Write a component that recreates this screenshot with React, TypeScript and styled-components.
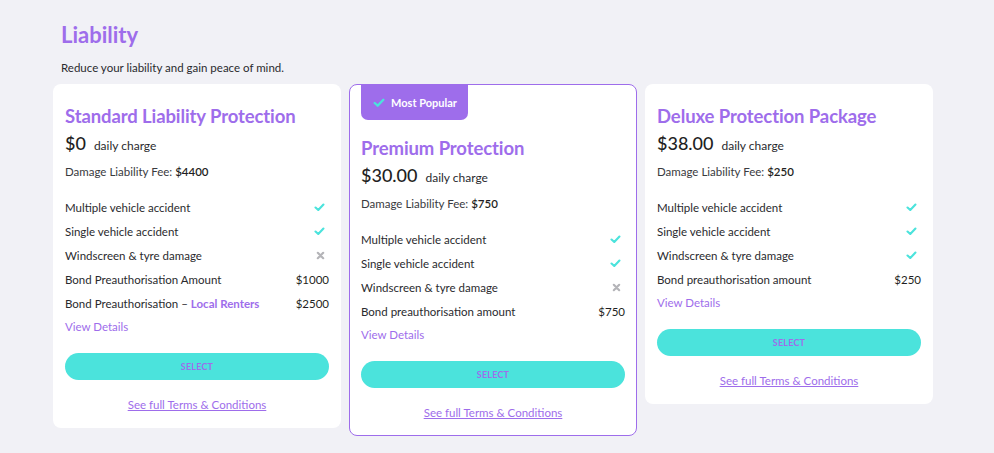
import styled, { createGlobalStyle } from "styled-components";

const GlobalStyle = createGlobalStyle`
  html, body {
    margin: 0;
    padding: 0;
    background: #f1f1f6;
    font-family: "Lato", "Open Sans", sans-serif;
    color: #2a2a2e;
  }
`;

const PURPLE = "#9e6deb";
const TEAL = "#4be3dc";

const Page = styled.div`
  padding: 20px 0 0 53px;
  width: 994px;
  height: 453px;
  box-sizing: border-box;
`;

const Heading = styled.h1`
  margin: 0 0 0 8px;
  font-size: 22px;
  line-height: 30px;
  font-weight: 700;
  color: ${PURPLE};
`;

const Subtitle = styled.p`
  margin: 11px 0 0 8px;
  font-size: 11.5px;
  line-height: 14px;
  color: #2a2a2e;
`;

const Cards = styled.div`
  display: flex;
  align-items: flex-start;
  gap: 8px;
  margin-top: 9px;
`;

const Card = styled.div<{ $featured?: boolean }>`
  width: 288px;
  box-sizing: border-box;
  background: #fff;
  border-radius: 8px;
  border: 1px solid ${(p) => (p.$featured ? PURPLE : "transparent")};
  padding: 0 11px 14px;
  display: flex;
  flex-direction: column;
`;

const Badge = styled.div`
  align-self: flex-start;
  display: flex;
  align-items: center;
  gap: 6px;
  height: 35px;
  padding: 0 11px 0 12px;
  background: ${PURPLE};
  color: #fff;
  font-size: 11px;
  font-weight: 700;
  border-radius: 0 0 7px 7px;
  margin-bottom: 17px;
`;

const Title = styled.h2<{ $first?: boolean }>`
  margin: ${(p) => (p.$first ? "20px" : "0")} 0 0;
  font-size: 18.5px;
  line-height: 22px;
  font-weight: 700;
  color: ${PURPLE};
  letter-spacing: -0.1px;
`;

const PriceRow = styled.div`
  display: flex;
  align-items: baseline;
  gap: 8px;
  margin-top: 4px;
  line-height: 24px;
`;

const Price = styled.span`
  font-size: 18px;
  font-weight: 500;
  color: #1f1f23;
`;

const PriceNote = styled.span`
  font-size: 12px;
  color: #2a2a2e;
`;

const Fee = styled.div`
  margin-top: 6px;
  font-size: 11.5px;
  line-height: 16px;
  color: #3a3a3e;

  b {
    font-weight: 600;
    color: #1f1f23;
  }
`;

const Features = styled.ul`
  list-style: none;
  margin: 15px 0 0;
  padding: 0;
`;

const Feature = styled.li`
  display: flex;
  justify-content: space-between;
  align-items: center;
  height: 24px;
  font-size: 11.5px;
  color: #2a2a2e;
`;

const Value = styled.span`
  font-size: 11.5px;
  color: #1f1f23;
`;

const Highlight = styled.span`
  color: ${PURPLE};
  font-weight: 700;
`;

const IconSlot = styled.span`
  display: flex;
  margin-right: 4px;
`;

const Link = styled.a`
  display: block;
  line-height: 24px;
  font-size: 11.5px;
  color: ${PURPLE};
  text-decoration: none;
  cursor: pointer;
`;

const SelectButton = styled.button`
  margin-top: 14px;
  height: 27px;
  width: 100%;
  border: none;
  border-radius: 14px;
  background: ${TEAL};
  color: ${PURPLE};
  font-family: inherit;
  font-size: 9px;
  font-weight: 700;
  letter-spacing: 0.2px;
  cursor: pointer;
`;

const Terms = styled.a`
  margin-top: 17px;
  align-self: center;
  line-height: 16px;
  font-size: 11.5px;
  color: ${PURPLE};
  text-decoration: underline;
  cursor: pointer;
`;

const Check = ({ size = 11 }: { size?: number }) => (
  <svg width={size} height={size * 0.8} viewBox="0 0 12 10">
    <path
      d="M1.5 5.2 L4.6 8 L10.5 1.8"
      fill="none"
      stroke={TEAL}
      strokeWidth={2.4}
      strokeLinecap="round"
      strokeLinejoin="round"
    />
  </svg>
);

const Cross = () => (
  <svg width={9} height={9} viewBox="0 0 10 10">
    <path
      d="M2 2 L8 8 M8 2 L2 8"
      stroke="#b4b4b8"
      strokeWidth={2.4}
      strokeLinecap="round"
    />
  </svg>
);

type Row = { label: React.ReactNode; value?: string; ok?: boolean };

type Plan = {
  name: string;
  price: string;
  fee: string;
  featured?: boolean;
  rows: Row[];
};

const plans: Plan[] = [
  {
    name: "Standard Liability Protection",
    price: "$0",
    fee: "$4400",
    rows: [
      { label: "Multiple vehicle accident", ok: true },
      { label: "Single vehicle accident", ok: true },
      { label: "Windscreen & tyre damage", ok: false },
      { label: "Bond Preauthorisation Amount", value: "$1000" },
      {
        label: (
          <>
            Bond Preauthorisation – <Highlight>Local Renters</Highlight>
          </>
        ),
        value: "$2500",
      },
    ],
  },
  {
    name: "Premium Protection",
    price: "$30.00",
    fee: "$750",
    featured: true,
    rows: [
      { label: "Multiple vehicle accident", ok: true },
      { label: "Single vehicle accident", ok: true },
      { label: "Windscreen & tyre damage", ok: false },
      { label: "Bond preauthorisation amount", value: "$750" },
    ],
  },
  {
    name: "Deluxe Protection Package",
    price: "$38.00",
    fee: "$250",
    rows: [
      { label: "Multiple vehicle accident", ok: true },
      { label: "Single vehicle accident", ok: true },
      { label: "Windscreen & tyre damage", ok: true },
      { label: "Bond preauthorisation amount", value: "$250" },
    ],
  },
];

const PlanCard = ({ plan }: { plan: Plan }) => (
  <Card $featured={plan.featured}>
    {plan.featured && (
      <Badge>
        <Check size={12} />
        Most Popular
      </Badge>
    )}
    <Title $first={!plan.featured}>{plan.name}</Title>
    <PriceRow>
      <Price>{plan.price}</Price>
      <PriceNote>daily charge</PriceNote>
    </PriceRow>
    <Fee>
      Damage Liability Fee: <b>{plan.fee}</b>
    </Fee>
    <Features>
      {plan.rows.map((row, i) => (
        <Feature key={i}>
          <span>{row.label}</span>
          {row.value ? (
            <Value>{row.value}</Value>
          ) : (
            <IconSlot>{row.ok ? <Check /> : <Cross />}</IconSlot>
          )}
        </Feature>
      ))}
    </Features>
    <Link>View Details</Link>
    <SelectButton>SELECT</SelectButton>
    <Terms>See full Terms &amp; Conditions</Terms>
  </Card>
);

export default function App() {
  return (
    <>
      <GlobalStyle />
      <Page>
        <Heading>Liability</Heading>
        <Subtitle>Reduce your liability and gain peace of mind.</Subtitle>
        <Cards>
          {plans.map((p) => (
            <PlanCard key={p.name} plan={p} />
          ))}
        </Cards>
      </Page>
    </>
  );
}
